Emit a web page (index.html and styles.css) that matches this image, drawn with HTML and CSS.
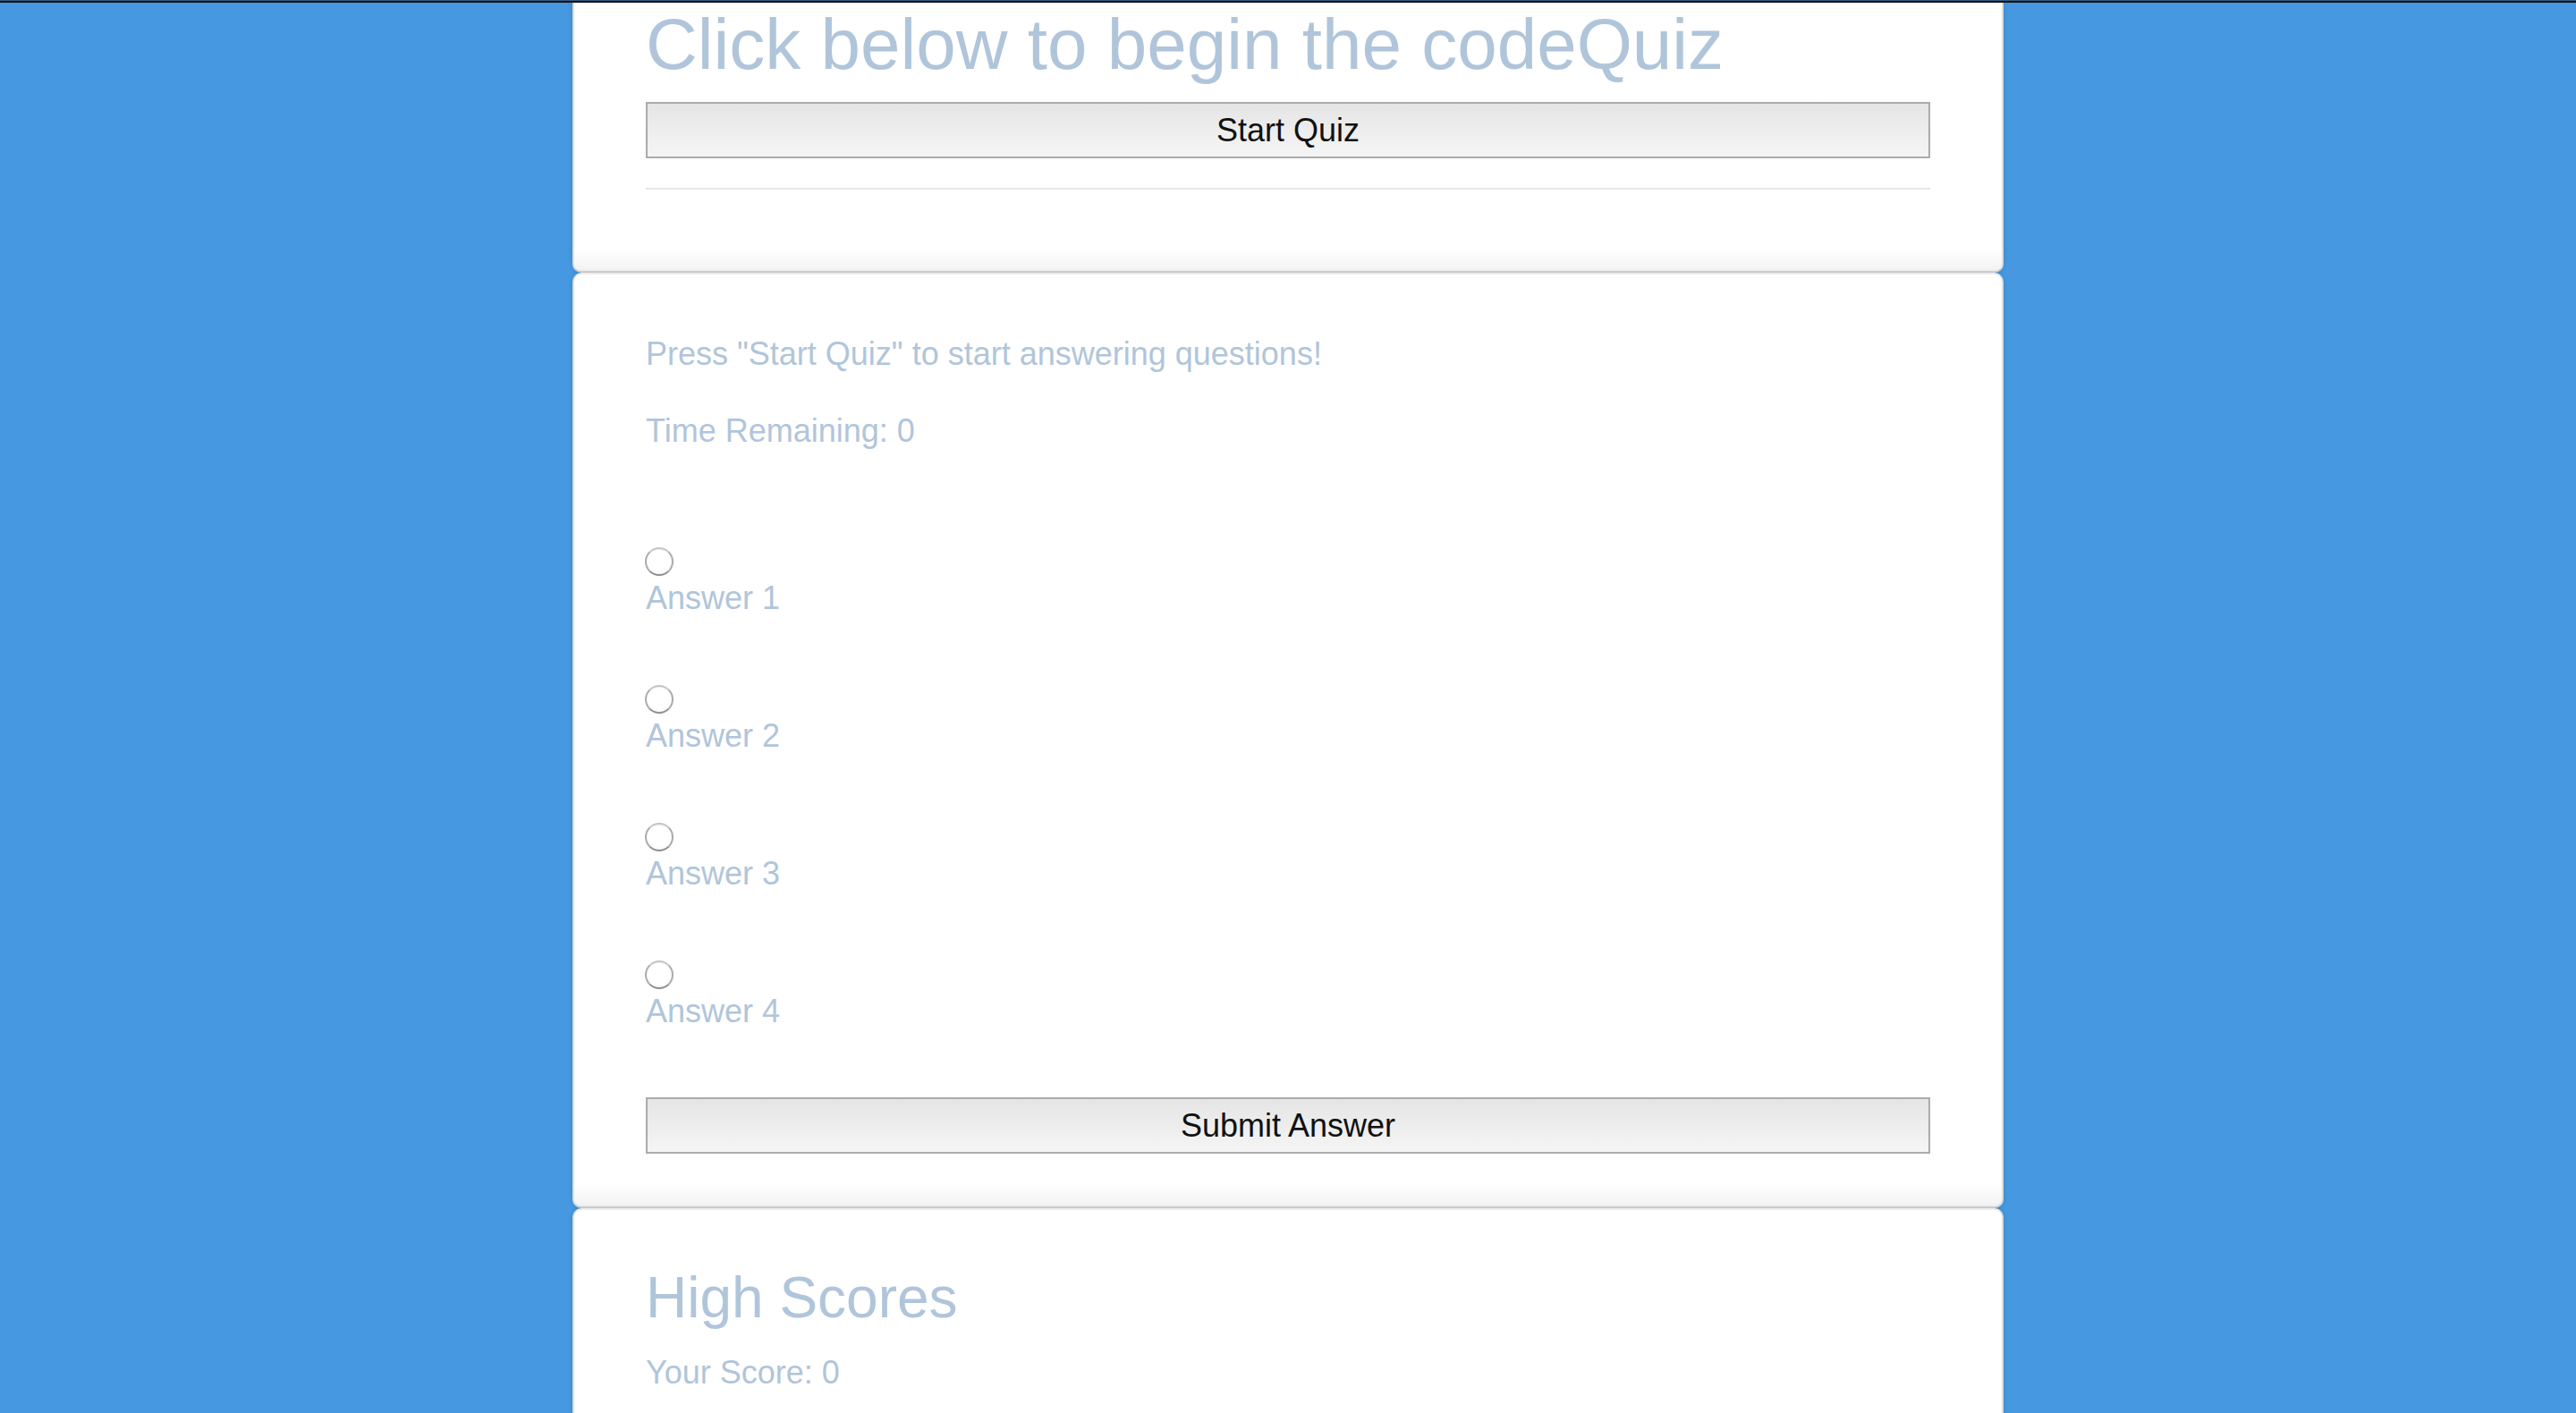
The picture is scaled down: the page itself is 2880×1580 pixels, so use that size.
FILE: index.html
```html
<!DOCTYPE html>
<html lang="en">
<head>
<meta charset="utf-8">
<title>codeQuiz</title>
<link rel="stylesheet" href="styles.css">
</head>
<body>
<div class="topbar"></div>
<main class="page">
  <section class="card card-intro">
    <h1 class="title">Click below to begin the codeQuiz</h1>
    <button class="btn" type="button">Start Quiz</button>
    <hr class="divider">
  </section>
  <section class="card card-quiz">
    <p class="text">Press "Start Quiz" to start answering questions!</p>
    <p class="text timer">Time Remaining: 0</p>
    <div class="answers">
      <div class="answer"><input class="radio" type="radio" name="answer" id="a1"><label class="answer-label" for="a1">Answer 1</label></div>
      <div class="answer"><input class="radio" type="radio" name="answer" id="a2"><label class="answer-label" for="a2">Answer 2</label></div>
      <div class="answer"><input class="radio" type="radio" name="answer" id="a3"><label class="answer-label" for="a3">Answer 3</label></div>
      <div class="answer"><input class="radio" type="radio" name="answer" id="a4"><label class="answer-label" for="a4">Answer 4</label></div>
    </div>
    <button class="btn" type="button">Submit Answer</button>
  </section>
  <section class="card card-scores">
    <h2 class="subtitle">High Scores</h2>
    <p class="text">Your Score: 0</p>
  </section>
</main>
</body>
</html>
```

FILE: styles.css
```css
html, body {
  margin: 0;
  padding: 0;
}

body {
  background: #4699e0;
  font-family: "Liberation Sans", Arial, Helvetica, sans-serif;
  color: #b0c5da;
  overflow: hidden;
}

.topbar {
  position: fixed;
  top: 0;
  left: 0;
  right: 0;
  height: 3px;
  background: linear-gradient(to bottom, #2e5f86 0, #2e5f86 1px, #111 1px, #111 3px);
  z-index: 10;
}

.page {
  width: 1600px;
  margin: 0 auto;
  display: flex;
  flex-direction: column;
}

.card {
  box-sizing: border-box;
  background: linear-gradient(to bottom, #fff calc(100% - 26px), #f3f3f3 100%);
  border: 2px solid #dedede;
  border-top-color: #ececec;
  border-bottom-color: #d4d4d4;
  border-radius: 10px;
  box-shadow: 0 0 6px rgba(0, 0, 0, 0.12);
  padding: 60px 80px 59px;
}

.card-intro {
  border-top: none;
  border-top-left-radius: 0;
  border-top-right-radius: 0;
  padding-top: 2px;
  padding-bottom: 91px;
}

.card-quiz {
  padding-top: 62px;
}

.card-scores {
  min-height: 400px;
}

.title {
  margin: 0 0 16px;
  font-size: 80px;
  line-height: 96px;
  font-weight: 400;
  color: #b0c5da;
  white-space: nowrap;
}

.subtitle {
  margin: 0 0 18px;
  font-size: 64px;
  line-height: 77px;
  font-weight: 400;
  color: #b0c5da;
}

.text {
  margin: 0 0 33px;
  font-size: 36px;
  line-height: 53px;
}

.timer {
  margin-bottom: 0;
}

.btn {
  display: block;
  box-sizing: border-box;
  width: 100%;
  height: 63px;
  margin: 0;
  padding: 0;
  border: 2px solid #ababab;
  border-radius: 0;
  background: linear-gradient(to bottom, #e5e5e5 0%, #f5f5f5 100%);
  font-family: "Liberation Sans", Arial, Helvetica, sans-serif;
  font-size: 36px;
  color: #111;
  text-align: center;
}

.divider {
  margin: 33px 0 0;
  border: 0;
  border-top: 2px solid #e6e6e6;
  height: 0;
}

.answers {
  padding-top: 104px;
  margin-bottom: 76px;
  display: flex;
  flex-direction: column;
  gap: 77px;
}

.answer {
  display: flex;
  flex-direction: column;
  align-items: flex-start;
}

.radio {
  -webkit-appearance: none;
  appearance: none;
  display: block;
  box-sizing: border-box;
  width: 32px;
  height: 32px;
  margin: 0 0 4px -1px;
  border-radius: 50%;
  border: 2px solid #ababab;
  border-top-color: #c4c4c4;
  border-bottom-color: #8f8f8f;
  background: radial-gradient(circle at 50% 40%, #ffffff 55%, #f2f2f2 100%);
  box-shadow: inset 0 1px 1px rgba(0, 0, 0, 0.06);
}

.answer-label {
  display: block;
  font-size: 36px;
  line-height: 41px;
  color: #b0c5da;
}
```
